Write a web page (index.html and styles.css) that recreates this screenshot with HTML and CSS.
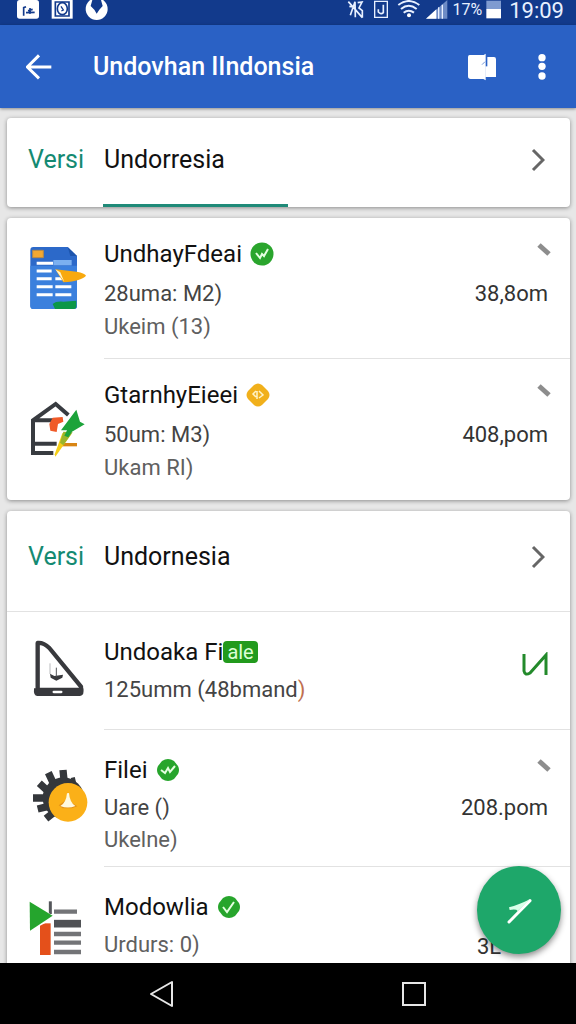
FILE: index.html
```
<!DOCTYPE html>
<html lang="id">
<head>
    <meta charset="UTF-8">
    <meta name="viewport" content="width=device-width, initial-scale=1.0">
    <title>Undovhan IIndonsia</title>
    <link rel="stylesheet" href="styles.css">
</head>
<body>
    <div class="status-bar">
        <svg class="status-left" width="96" height="25" viewBox="42 0 288 75">
            <path fill="#fff" d="M51 8Q51 0 59 0H109Q117 0 117 8V48Q117 56 109 56H59Q51 56 51 48Z"/>
            <path fill="none" stroke="#123a8c" stroke-width="5" d="M71 47V23L78 20M90 42V24M84 32L98 28M78 38L104 37"/>
            <path fill="#fff" d="M155 0H218V56H155Z"/>
            <path fill="none" stroke="#123a8c" stroke-width="5" d="M166 6H207V48H166Z"/>
            <ellipse cx="187" cy="26" rx="15" ry="18" fill="none" stroke="#123a8c" stroke-width="5"/>
            <path fill="none" stroke="#123a8c" stroke-width="4" d="M183 19L190 30L184 33"/>
            <circle cx="290" cy="27" r="33" fill="#fff"/>
            <path fill="#123a8c" d="M277 0H303L308 18L298 29L290 41L283 29L272 18Z"/>
        </svg>
        <svg class="status-right" width="102" height="25" viewBox="180 0 306 75">
            <g fill="none" stroke="#e8f0ff" stroke-width="5">
                <path d="M184 5L226 53M190 46L204 5L205 52M212 8L225 6L216 24L226 32V53M187 19L200 21"/>
                <path stroke-width="4" d="M263 4H301V52H263Z"/>
                <path d="M289 14V38Q282 45 274 36V28"/>
                <path stroke-width="6" d="M334 15Q365 -9 397 15M342 27Q365 8 389 27M350 38Q365 26 381 38"/>
            </g>
            <circle cx="366" cy="46" r="6" fill="#fff"/>
            <path fill="#6e8cc6" d="M417 56L481 0V56Z"/>
            <path fill="#fff" d="M417 56L448 28V56Z"/>
            <path stroke="#e8f0ff" stroke-width="4" d="M455 22V56M466 14V56"/>
        </svg>
        <span class="battery-text">17%</span>
        <svg width="15" height="25" viewBox="600 0 45 75">
            <path fill="#7f9bd0" d="M601 2H645V28H601Z"/>
            <path fill="#fff" d="M601 27H645V55H601Z"/>
        </svg>
        <span class="clock">19:09</span>
    </div>

    <header class="app-bar">
        <button class="icon-btn" aria-label="Back">
            <svg width="26" height="26" viewBox="80 159 78 78" fill="none" stroke="#fff" stroke-width="9">
                <path d="M156 198H86M119 163L84 198L119 232"/>
            </svg>
        </button>
        <h1>Undovhan IIndonsia</h1>
        <button class="icon-btn" aria-label="View">
            <svg width="30" height="30" viewBox="534 153 90 90">
                <path fill="#fff" d="M545 162H587L593 158V238L586 234H548Q540 234 540 226V168Q540 162 545 162ZM598 168H618Q624 168 624 175V228H598Z"/>
                <path fill="#fff" d="M592 196H600V228H592Z"/>
                <path fill="none" stroke="#2b60c4" stroke-width="2" d="M582 191L591 182"/>
            </svg>
        </button>
        <button class="icon-btn" aria-label="More">
            <svg width="8" height="28" viewBox="751 156 24 84" fill="#fff">
                <circle cx="763" cy="170" r="11"/>
                <circle cx="763" cy="196" r="11"/>
                <circle cx="763" cy="225" r="11"/>
            </svg>
        </button>
    </header>

    <main class="content">
        <section class="card">
            <a class="card-head" href="#">
                <span class="label">Versi</span>
                <span class="name">Undorresia</span>
                <svg class="chevron" width="14" height="24" viewBox="0 0 14 24"><path d="M2 2L12 12L2 22"/></svg>
            </a>
            <div class="tab-line"></div>
        </section>

        <section class="card list">
            <div class="row">
                <svg class="row-icon" viewBox="84 45 180 240">
                    <path fill="#2c69c9" d="M100 69H203L231 96V246Q231 255 221 255H101Q91 255 91 245V79Q91 69 100 69Z"/>
                    <path fill="#3b80dd" d="M91 125H231V246Q231 255 221 255H101Q91 255 91 245Z"/>
                    <path fill="#1d55ad" d="M203 69L231 96H211Z"/>
                    <path fill="#f3a832" stroke="#b98a45" stroke-width="3" d="M98 79H130V101H98Z"/>
                    <path fill="#7bb0f0" d="M160 108H215V124H160Z"/>
                    <path stroke="#fff" stroke-width="9" d="M110 118H159M110 141H155M110 164H155M166 164H190M110 188H158M166 188H214M110 212H158M166 212H214"/>
                    <path fill="#0b9748" d="M158 240Q168 231 190 233L229 230V246Q229 255 220 255H165Z"/>
                    <path fill="#f8a90e" d="M166 136L230 143Q254 147 258 155Q246 170 190 175Z"/>
                    <path fill="#fff4cf" d="M166 136L181 145L193 174Z"/>
                </svg>
                <div class="info">
                    <h2>UndhayFdeai
                        <svg class="badge" viewBox="0 0 24 24"><circle cx="12" cy="12" r="11.5" fill="#2aa52d"/><path d="M6 11L10 16L12 12L14 14L18 7" fill="none" stroke="#e4ffe0" stroke-width="2"/></svg>
                    </h2>
                    <p>28uma: M2)</p>
                    <p class="soft">Ukeim (13)</p>
                </div>
                <div class="side">
                    <button class="edit" aria-label="Edit"><svg width="14" height="14" viewBox="0 0 14 14"><path d="M2 2L12 11"/></svg></button>
                    <span class="amount">38,8om</span>
                </div>
            </div>
            <div class="row">
                <svg class="row-icon" viewBox="84 45 180 240">
                    <g fill="none" stroke="#383b40" stroke-width="12">
                        <path d="M205 150L167 117L99 166V264H160M99 166H167M99 236H170"/>
                    </g>
                    <path fill="#f05a28" d="M148 177L158 158L188 156L190 170L174 177L170 201L151 197Z"/>
                    <path stroke="#d88513" stroke-width="10" d="M178 239H231"/>
                    <path fill="#f5cf18" d="M187 205L214 207L166 275L164 268Z"/>
                    <path fill="#9bb52a" d="M190 200L218 202L190 241L180 233Z"/>
                    <path fill="#1ca33a" d="M229 134L240 170L254 178L216 200L205 217L193 212L201 196L183 196Z"/>
                </svg>
                <div class="info">
                    <h2>GtarnhyEieei
                        <svg class="badge" viewBox="0 0 24 24"><path fill="#f1b01b" d="M8 2Q12 -1 16 2L22 8Q25 12 22 16L16 22Q12 25 8 22L2 16Q-1 12 2 8Z"/><path d="M10 8L7 11L10 14M11 8V16M13 8L17 12L13 15" fill="none" stroke="#fff3c8" stroke-width="1.5"/></svg>
                    </h2>
                    <p>50um: M3)</p>
                    <p class="soft">Ukam RI)</p>
                </div>
                <div class="side">
                    <button class="edit" aria-label="Edit"><svg width="14" height="14" viewBox="0 0 14 14"><path d="M2 2L12 11"/></svg></button>
                    <span class="amount">408,pom</span>
                </div>
            </div>
        </section>

        <section class="card list compact">
            <a class="card-head" href="#">
                <span class="label">Versi</span>
                <span class="name">Undornesia</span>
                <svg class="chevron" width="14" height="24" viewBox="0 0 14 24"><path d="M2 2L12 12L2 22"/></svg>
            </a>
            <div class="row">
                <svg class="row-icon short" viewBox="84 51 180 186">
                    <path fill="none" stroke="#38393d" stroke-width="13" stroke-linejoin="round" d="M113 210V69Q130 67 148 84L243 200V210Z"/>
                    <path fill="#38393d" d="M102 205H250Q254 227 240 228H112Q100 228 102 205Z"/>
                    <path stroke="#fff" stroke-width="7" stroke-linecap="round" d="M161 216H184"/>
                    <path fill="#38393d" d="M150 161L163 168L189 164L187 173L169 182L152 173Z"/>
                    <path stroke="#55565a" stroke-width="3" d="M169 143V170"/>
                    <path stroke="#b9babd" stroke-width="3" d="M150 130V162"/>
                </svg>
                <div class="info">
                    <h2>Undoaka Fi<span class="tag">ale</span></h2>
                    <p>125umm (48bmand<span class="warn">)</span></p>
                </div>
                <div class="side middle">
                    <svg width="26" height="26" viewBox="0 0 26 26" fill="none" stroke="#238a2b" stroke-width="3"><path d="M2 2V19Q3 24 8 21L24 3V23"/></svg>
                </div>
            </div>
            <div class="row">
                <svg class="row-icon" viewBox="84 45 180 240">
                    <circle cx="190" cy="174" r="62" fill="#34373b"/>
                    <path stroke="#34373b" stroke-width="22" d="M192 120L189 90M160 130L145 98M140 150L118 130M132 174H99M142 200L113 207M158 220L138 236M215 125L227 122"/>
                    <circle cx="204" cy="187" r="58" fill="#fbb018"/>
                    <path fill="#e59216" d="M176 196L198 180L204 157L212 186L232 199L215 205H188Z"/>
                    <path fill="#fff9df" d="M181 198Q198 190 201 160L207 159Q209 187 226 198Q204 207 181 198Z"/>
                </svg>
                <div class="info">
                    <h2>Filei
                        <svg class="badge" viewBox="0 0 24 24"><path fill="#27a52c" d="M6 3Q12 -1 18 3L22 8Q24 12 22 16L18 21Q12 25 6 21L2 16Q0 12 2 8Z"/><path d="M5 12L9 15L12 10L14 14L19 8" fill="none" stroke="#e4ffe0" stroke-width="2"/></svg>
                    </h2>
                    <p>Uare ()</p>
                    <p class="soft">Ukelne)</p>
                </div>
                <div class="side">
                    <button class="edit" aria-label="Edit"><svg width="14" height="14" viewBox="0 0 14 14"><path d="M2 2L12 11"/></svg></button>
                    <span class="amount">208.pom</span>
                </div>
            </div>
            <div class="row">
                <svg class="row-icon" viewBox="84 69 180 240">
                    <path stroke="#54565a" stroke-width="9" d="M151 97V135"/>
                    <path fill="#e4501b" d="M120 163H152V258H120Z"/>
                    <path stroke="#737477" stroke-width="13" d="M162 128H231M162 195H243M162 221H243M162 249H243"/>
                    <path stroke="#505256" stroke-width="23" d="M162 164H243"/>
                    <path fill="#fff" d="M88 98L160 140L159 150L90 186Z"/>
                    <path fill="#25a52d" d="M89 98L158 140L90 185Z"/>
                </svg>
                <div class="info">
                    <h2>Modowlia
                        <svg class="badge" viewBox="0 0 24 24"><path fill="#27a52c" d="M6 3Q12 -1 18 3L22 8Q24 12 22 16L18 21Q12 25 6 21L2 16Q0 12 2 8Z"/><path d="M6 12L10 17L17 7" fill="none" stroke="#e4ffe0" stroke-width="2"/></svg>
                    </h2>
                    <p class="soft">Urdurs: 0)</p>
                </div>
                <div class="side last">
                    <span class="amount">3L</span>
                </div>
            </div>
        </section>

        <button class="fab" aria-label="Compose">
            <svg width="26" height="28" viewBox="393 138 78 84">
                <path fill="none" stroke="#fff" stroke-width="9" stroke-linecap="round" d="M402 216L465 152"/>
                <path fill="#d9ffe9" d="M402 172Q430 165 465 148L428 183Q424 176 404 180Z"/>
            </svg>
        </button>
    </main>

    <nav class="nav-bar">
        <button class="icon-btn" aria-label="Back">
            <svg width="24" height="28" viewBox="0 0 24 28" fill="none" stroke="#e6e6e6" stroke-width="2" stroke-linejoin="round"><path d="M22 2V26L1 14Z"/></svg>
        </button>
        <button class="icon-btn" aria-label="Recents">
            <svg width="26" height="26" viewBox="0 0 26 26" fill="none" stroke="#e6e6e6" stroke-width="2"><path d="M2 2H24V24H2Z"/></svg>
        </button>
    </nav>
</body>
</html>
```
FILE: styles.css
```
* {
    box-sizing: border-box;
}

body {
    margin: 0;
    height: 100vh;
    display: flex;
    flex-direction: column;
    overflow: hidden;
    background: #e7e7e7;
    color: #111;
    font-family: Roboto, "Liberation Sans", sans-serif;
}

h1, h2, p {
    margin: 0;
    font-weight: 400;
}

svg {
    display: block;
}

button {
    padding: 0;
    border: none;
    background: none;
    cursor: pointer;
}

.status-bar {
    display: flex;
    flex: none;
    height: 25px;
    padding: 0 12px 0 14px;
    background: #123a8c;
    color: #e8f0ff;
}

.status-right {
    margin-left: auto;
}

.battery-text {
    margin: 0 4px;
    font-size: 16px;
    line-height: 20px;
}

.clock {
    margin-left: 8px;
    font-size: 22px;
    line-height: 22px;
}

.app-bar {
    display: flex;
    flex: none;
    align-items: center;
    height: 83px;
    padding: 0 30px 0 26px;
    background: #2a61c5;
    color: #fff;
    box-shadow: 0 1px 3px rgba(0, 0, 0, 0.4);
    z-index: 1;
}

.app-bar h1 {
    flex: 1;
    margin-left: 41px;
    font-size: 25px;
    font-weight: 500;
    line-height: 32px;
}

.app-bar h1 + .icon-btn {
    margin-right: 42px;
}

.content {
    position: relative;
    flex: 1;
    min-height: 0;
    display: flex;
    flex-direction: column;
    gap: 11px;
    padding: 10px 6px 0 7px;
    overflow: hidden;
}

.card {
    flex: none;
    background: #fff;
    border-radius: 4px;
    box-shadow: 0 1px 4px rgba(0, 0, 0, 0.4);
}

.card-head {
    display: flex;
    align-items: center;
    padding: 27px 25px 29px 21px;
    color: #111;
    font-size: 25px;
    line-height: 30px;
    text-decoration: none;
}

.label {
    width: 76px;
    color: #148a72;
}

.name {
    flex: 1;
}

.chevron path {
    fill: none;
    stroke: #666;
    stroke-width: 3;
}

.tab-line {
    width: 185px;
    height: 3px;
    margin-left: 96px;
    background: #1f8a78;
}

.row {
    position: relative;
    display: flex;
    padding: 21px 22px 16px 21px;
}

/* divider starts at the text column */
.row::after {
    content: "";
    position: absolute;
    left: 97px;
    right: 0;
    bottom: 0;
    height: 1px;
    background: #e2e2e2;
}

.row:last-child::after {
    display: none;
}

.row-icon {
    flex: none;
    width: 60px;
    height: 80px;
    margin-right: 16px;
}

.row-icon.short {
    height: 62px;
}

.info {
    flex: 1;
}

.info h2 {
    display: flex;
    align-items: center;
    margin-bottom: 8px;
    font-size: 24px;
    line-height: 30px;
}

.info p {
    color: #444;
    font-size: 22px;
    line-height: 33px;
}

.info .soft {
    color: #606060;
}

.badge {
    width: 24px;
    height: 24px;
    margin-left: 8px;
}

.tag {
    padding: 0 4px;
    border-radius: 4px;
    background: #229a1d;
    color: #dcffd6;
    font-size: 20px;
    line-height: 22px;
}

.warn {
    color: #c0704f;
}

.side {
    display: flex;
    flex-direction: column;
    align-items: flex-end;
}

.edit {
    height: 22px;
    margin-right: -3px;
    margin-bottom: 16px;
}

.edit path {
    fill: none;
    stroke: #8d8d8d;
    stroke-width: 5;
}

.amount {
    color: #333;
    font-size: 22px;
    line-height: 33px;
}

.compact .card-head {
    padding-top: 31px;
    padding-bottom: 39px;
    border-bottom: 1px solid #e2e2e2;
}

.compact .row {
    min-height: 118px;
    padding-top: 25px;
    padding-bottom: 11px;
}

.compact .info h2 {
    margin-bottom: 7px;
}

.compact .info p {
    line-height: 32px;
}

.compact .edit {
    margin-bottom: 14px;
}

.side.middle {
    padding-top: 15px;
}

.side.last {
    width: 71px;
    align-items: flex-start;
    padding-top: 38px;
}

.fab {
    position: absolute;
    right: 15px;
    bottom: 9px;
    width: 84px;
    height: 88px;
    display: flex;
    align-items: center;
    justify-content: center;
    border-radius: 50%;
    background: #1ea76a;
    box-shadow: 0 3px 6px rgba(0, 0, 0, 0.45);
}

.nav-bar {
    display: flex;
    flex: none;
    align-items: center;
    justify-content: space-around;
    height: 61px;
    padding: 0 36px;
    background: #000;
}
```
